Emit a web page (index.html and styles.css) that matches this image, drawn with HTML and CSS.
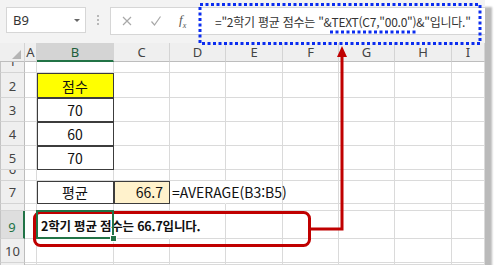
FILE: index.html
```html
<!DOCTYPE html>
<html lang="ko">
<head>
    <meta charset="UTF-8">
    <meta name="viewport" content="width=device-width, initial-scale=1.0">
    <link rel="stylesheet" href="styles.css">
    <title>TEXT 함수 예제</title>
</head>
<body>

<div id="window">
    <div id="toolbar">
        <div class="nameBox">
            <span>B9</span>
            <span class="dropArrow"></span>
        </div>
        <div class="grip"><i></i><i></i><i></i></div>
        <div class="formulaBox">
            <svg class="fxButton" width="12" height="12" viewBox="0 0 12 12">
                <path d="M2 2 L10 10 M10 2 L2 10" stroke="#a8a8a8" stroke-width="1.2" fill="none"/>
            </svg>
            <svg class="fxButton" width="12" height="12" viewBox="0 0 12 12">
                <path d="M1.5 6.5 L4.5 10 L10.5 1.5" stroke="#a8a8a8" stroke-width="1.2" fill="none"/>
            </svg>
            <span class="fxButton insertFn"><i>f</i><sub>x</sub></span>
            <span class="formulaText">="2학기 평균 점수는 "&amp;TEXT(C7,"00.0")&amp;"입니다."</span>
        </div>
    </div>

    <div id="sheet"></div>

    <svg id="marks" width="485" height="265" viewBox="0 0 485 265">
        <rect x="200" y="4.5" width="280" height="39" fill="none" stroke="#0a2cf0" stroke-width="3" stroke-dasharray="3 2.5"/>
        <line x1="330" y1="32" x2="416" y2="32" stroke="#0a2cf0" stroke-width="3" stroke-dasharray="3 2.5"/>
        <rect x="34.5" y="212.5" width="275" height="33" rx="6" fill="none" stroke="#c00000" stroke-width="3"/>
        <path d="M310 229 H342 V56" fill="none" stroke="#c00000" stroke-width="3"/>
        <polygon points="342,46 337,57 347,57" fill="#c00000"/>
    </svg>
</div>

<script>
    const sheet = document.getElementById("sheet");
    const colNames = ["", "A", "B", "C", "D", "E", "F", "G", "H", "I"];
    const rowCount = 11;

    // cell contents and extra classes
    const cellData = {
        B2: { text: "점수", cls: ["boxed", "center", "yellow"] },
        B3: { text: "70", cls: ["boxed", "center"] },
        B4: { text: "60", cls: ["boxed", "center"] },
        B5: { text: "70", cls: ["boxed", "center"] },
        B7: { text: "평균", cls: ["boxed", "center"] },
        C7: { text: "66.7", cls: ["boxed", "right", "peach"] },
        D7: { text: "=AVERAGE(B3:B5)", cls: ["spill"] },
        B9: { text: "2학기 평균 점수는 66.7입니다.", cls: ["spill", "result", "selected"] },
        C9: { text: "", cls: ["noLine"] }
    };

    for (let r = 0; r <= rowCount; r++) {
        for (let c = 0; c < colNames.length; c++) {
            const cell = document.createElement("div");
            cell.classList.add("cell");

            if (r === 0) {
                cell.classList.add("colHead");
                if (c === 0) {
                    cell.classList.add("corner");
                } else {
                    cell.textContent = colNames[c];
                }
                if (colNames[c] === "B") cell.classList.add("active");
            } else if (c === 0) {
                cell.classList.add("rowHead");
                cell.textContent = r;
                if (r === 9) cell.classList.add("active");
            } else {
                const data = cellData[colNames[c] + r];
                if (data) {
                    cell.textContent = data.text;
                    cell.classList.add(...data.cls);
                }
            }

            sheet.appendChild(cell);
        }
    }
</script>

</body>
</html>
```

FILE: styles.css
```css
body {
    margin: 0;
    background-color: #fff;
    font-family: "Noto Sans CJK KR", "Noto Sans", sans-serif;
}

#window {
    position: relative;
    width: 485px;
    height: 265px;
    background-color: #fff;
    box-shadow: 7px 7px 2px #bababa;
    overflow: hidden;
}

#toolbar {
    display: flex;
    align-items: flex-start;
    height: 43px;
    padding-top: 7px;
    box-sizing: border-box;
    background-color: #f3f3f3;
}

.nameBox {
    display: flex;
    align-items: center;
    justify-content: space-between;
    width: 80px;
    height: 26px;
    margin-left: 6px;
    padding: 0 5px 0 6px;
    box-sizing: border-box;
    background-color: #fff;
    border: 1px solid #d6d6d6;
    font-family: "Noto Sans", sans-serif;
    font-size: 13px;
    color: #333;
}

.dropArrow {
    width: 0;
    height: 0;
    border-left: 3px solid transparent;
    border-right: 3px solid transparent;
    border-top: 3px solid #666;
}

.grip {
    display: flex;
    flex-direction: column;
    gap: 2px;
    width: 24px;
    align-items: center;
    padding-top: 8px;
}

.grip i {
    width: 2px;
    height: 2px;
    background-color: #b8b8b8;
}

.formulaBox {
    display: flex;
    align-items: center;
    flex: 1;
    height: 26px;
    padding-left: 10px;
    background-color: #fff;
    border: 1px solid #d6d6d6;
    border-right: none;
}

.fxButton {
    margin-right: 17px;
}

.insertFn {
    margin-right: 0;
    width: 20px;
    font-family: "Liberation Serif", serif;
    font-size: 13px;
    color: #555;
}

.insertFn sub {
    font-size: 8px;
    font-style: italic;
}

.formulaText {
    margin-left: 16px;
    font-size: 12px;
    letter-spacing: -0.25px;
    color: #333;
    white-space: nowrap;
}

#sheet {
    display: grid;
    grid-template-columns: 25px 12px 77px 56px 56px 57px 56px 56px 57px 33px;
    grid-template-rows: 19px 11px 25px 24px 24px 24px 11px 23px 7px 28px 24px 2px;
}

.cell {
    display: flex;
    align-items: flex-end;
    overflow: hidden;
    box-sizing: border-box;
    border-right: 1px solid #dadada;
    border-bottom: 1px solid #dadada;
    padding: 0 3px 1px 3px;
    font-size: 14px;
    line-height: 20px;
    color: #111;
    white-space: nowrap;
}

.colHead {
    align-items: center;
    justify-content: center;
    padding: 0;
    background-color: #efefef;
    border-right-color: #d4d4d4;
    border-bottom-color: #bdbdbd;
    font-family: "Noto Sans", sans-serif;
    font-size: 13px;
    line-height: 16px;
    color: #444;
}

.colHead.active {
    background-color: #d4d4d4;
    border-bottom: 2px solid #217346;
    color: #1e5e3a;
}

.corner {
    position: relative;
}

.corner::after {
    content: "";
    position: absolute;
    right: 3px;
    bottom: 2px;
    width: 0;
    height: 0;
    border-left: 9px solid transparent;
    border-bottom: 9px solid #b5b5b5;
}

.rowHead {
    justify-content: center;
    padding: 0 0 3px 0;
    background-color: #efefef;
    border-left: 1px solid #c4c4c4;
    border-right-color: #bdbdbd;
    border-bottom-color: #d4d4d4;
    font-family: "Noto Sans", sans-serif;
    font-size: 13px;
    line-height: 16px;
    color: #444;
}

.rowHead.active {
    background-color: #dedede;
    border-right: 2px solid #217346;
    color: #217346;
}

.boxed {
    outline: 1px solid #3c3c3c;
    outline-offset: -1px;
}

.center {
    justify-content: center;
}

.right {
    justify-content: flex-end;
    padding-right: 6px;
}

.yellow {
    background-color: #ffff00;
}

.peach {
    background-color: #fff2cc;
}

.spill {
    overflow: visible;
    border-right-color: transparent;
    padding-left: 2px;
    position: relative;
    z-index: 1;
}

.noLine {
    border-right-color: transparent;
}

.result {
    padding-left: 4px;
    padding-bottom: 2px;
    font-size: 12.5px;
    letter-spacing: -0.2px;
    font-weight: bold;
}

.selected::after {
    content: "";
    position: absolute;
    left: -1px;
    top: -1px;
    right: -1px;
    bottom: -1px;
    border: 2px solid #217346;
}

.selected::before {
    content: "";
    position: absolute;
    right: -4px;
    bottom: -4px;
    width: 5px;
    height: 5px;
    background-color: #217346;
    border: 1px solid #fff;
    z-index: 2;
}

#marks {
    position: absolute;
    top: 0;
    left: 0;
    pointer-events: none;
}
```
